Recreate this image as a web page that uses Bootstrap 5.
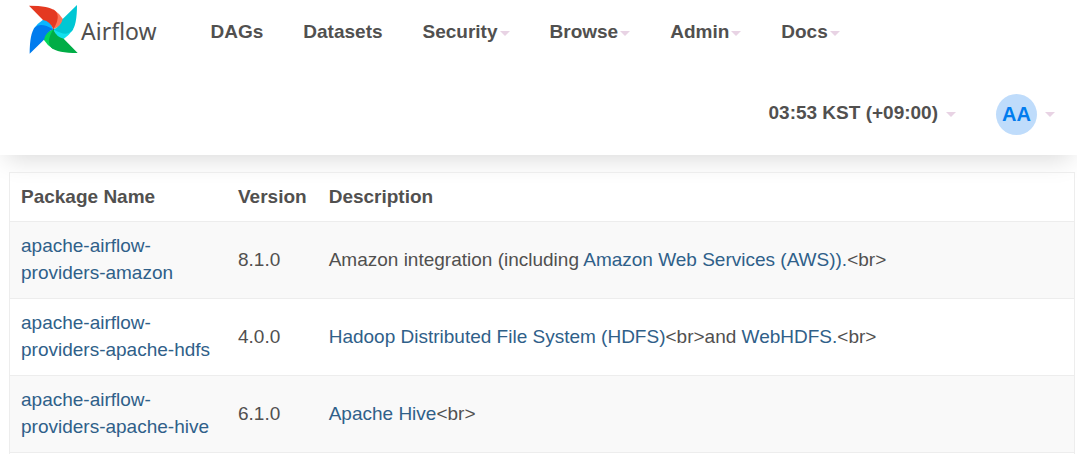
<!DOCTYPE html>
<html lang="en">
<head>
<meta charset="utf-8">
<meta name="viewport" content="width=device-width, initial-scale=1">
<title>Airflow - Providers</title>
<link rel="stylesheet" href="https://cdn.jsdelivr.net/npm/bootstrap@5.3.0/dist/css/bootstrap.min.css">
<style>
  body { font: 19px/27px "Liberation Sans", Arial, sans-serif; color: #51504f; background: #fff; }
  .top-bar { min-height: 155px; box-shadow: 0 10px 24px -6px rgba(0, 0, 0, .15); }
  .menu-row { min-height: 62px; padding-left: 27px; }
  .brand-name { font: 23px/30px "Noto Sans", sans-serif; color: #51504f; }
  .menu-link { color: #51504f; font-weight: 700; line-height: 27px; padding: 0; border: 0; background: none; }
  .main-menu { gap: 40px; margin-left: 54px; }
  .main-menu .menu-link { gap: 2px; }
  .caret { width: 0; height: 0; border: 5px solid transparent; border-top-color: #e8d3e4; border-bottom: 0; }
  .main-menu .caret { margin-top: 5px; }
  .user-row { gap: 40px; padding-right: 22px; margin-top: 32px; }
  .user-dot { width: 41px; height: 41px; background: #bfdcfb; color: #017cee; font-size: 20px; }
  .sheet { margin: 17px 2px 0 9px; border-color: #ededed !important; }
  .provider-table { color: inherit; --bs-table-color: #51504f; --bs-table-striped-color: #51504f; --bs-table-striped-bg: #f9f9f9; --bs-table-bg: transparent; border-color: #ededed; }
  .provider-table > :not(caption) > * > * { padding: 10px 11px 12px; }
  .provider-table > thead > tr > th { padding-bottom: 11px; }
  .provider-table a { color: #2f6089; text-decoration: none; }
  .col-package { width: 217px; }
  .col-version { width: 90px; }
</style>
</head>
<body class="d-flex flex-column min-vh-100">
<header class="top-bar">
  <nav class="menu-row d-flex align-items-center">
    <a href="#" class="d-flex align-items-center text-decoration-none">
      <svg class="mb-1" width="54" height="54" viewBox="81 6 162 162" aria-hidden="true">
        <defs>
          <path id="fold" d="M160 28Q178 40 191 60Q189 78 160 88Z"/>
          <path id="blade" d="M87 17Q148 17 166 33Q183 50 160 88Q151 64 129 60Z"/>
        </defs>
        <use href="#fold" fill="#ff7557"/>
        <use href="#fold" fill="#11e1ee" transform="rotate(90 160 88)"/>
        <use href="#fold" fill="#04d659" transform="rotate(180 160 88)"/>
        <use href="#fold" fill="#0cb6ff" transform="rotate(270 160 88)"/>
        <use href="#blade" fill="#e43921"/>
        <use href="#blade" fill="#00c7d4" transform="rotate(90 160 88)"/>
        <use href="#blade" fill="#00ad46" transform="rotate(180 160 88)"/>
        <use href="#blade" fill="#017cee" transform="rotate(270 160 88)"/>
        <circle cx="160" cy="88" r="2" fill="#51504f"/>
      </svg>
      <span class="brand-name">Airflow</span>
    </a>
    <ul class="main-menu list-unstyled d-flex mb-0">
      <li><a class="menu-link text-decoration-none" href="#">DAGs</a></li>
      <li><a class="menu-link text-decoration-none" href="#">Datasets</a></li>
      <li><button class="menu-link d-flex align-items-center" type="button">Security<span class="caret"></span></button></li>
      <li><button class="menu-link d-flex align-items-center" type="button">Browse<span class="caret"></span></button></li>
      <li><button class="menu-link d-flex align-items-center" type="button">Admin<span class="caret"></span></button></li>
      <li><button class="menu-link d-flex align-items-center" type="button">Docs<span class="caret"></span></button></li>
    </ul>
  </nav>
  <div class="user-row d-flex justify-content-end align-items-center">
    <button class="menu-link d-flex align-items-center gap-2" type="button"><span class="pb-1">03:53 KST (+09:00)</span><span class="caret"></span></button>
    <button class="menu-link d-flex align-items-center gap-2" type="button" aria-label="Account AA"><span class="user-dot rounded-circle d-flex align-items-center justify-content-center">AA</span><span class="caret"></span></button>
  </div>
</header>
<main class="sheet border border-bottom-0 flex-grow-1">
  <table class="provider-table table table-striped align-middle mb-0">
    <thead>
      <tr><th class="col-package" scope="col">Package Name</th><th class="col-version" scope="col">Version</th><th scope="col">Description</th></tr>
    </thead>
    <tbody>
      <tr><td><a href="#">apache-airflow-<wbr>providers-amazon</a></td><td>8.1.0</td><td>Amazon integration (including <a href="#">Amazon Web Services (AWS)).</a>&lt;br&gt;</td></tr>
      <tr><td><a href="#">apache-airflow-<wbr>providers-apache-hdfs</a></td><td>4.0.0</td><td><a href="#">Hadoop Distributed File System (HDFS)</a>&lt;br&gt;and <a href="#">WebHDFS.</a>&lt;br&gt;</td></tr>
      <tr><td><a href="#">apache-airflow-<wbr>providers-apache-hive</a></td><td>6.1.0</td><td><a href="#">Apache Hive</a>&lt;br&gt;</td></tr>
    </tbody>
  </table>
</main>
<script src="https://cdn.jsdelivr.net/npm/bootstrap@5.3.0/dist/js/bootstrap.bundle.min.js"></script>
</body>
</html>
